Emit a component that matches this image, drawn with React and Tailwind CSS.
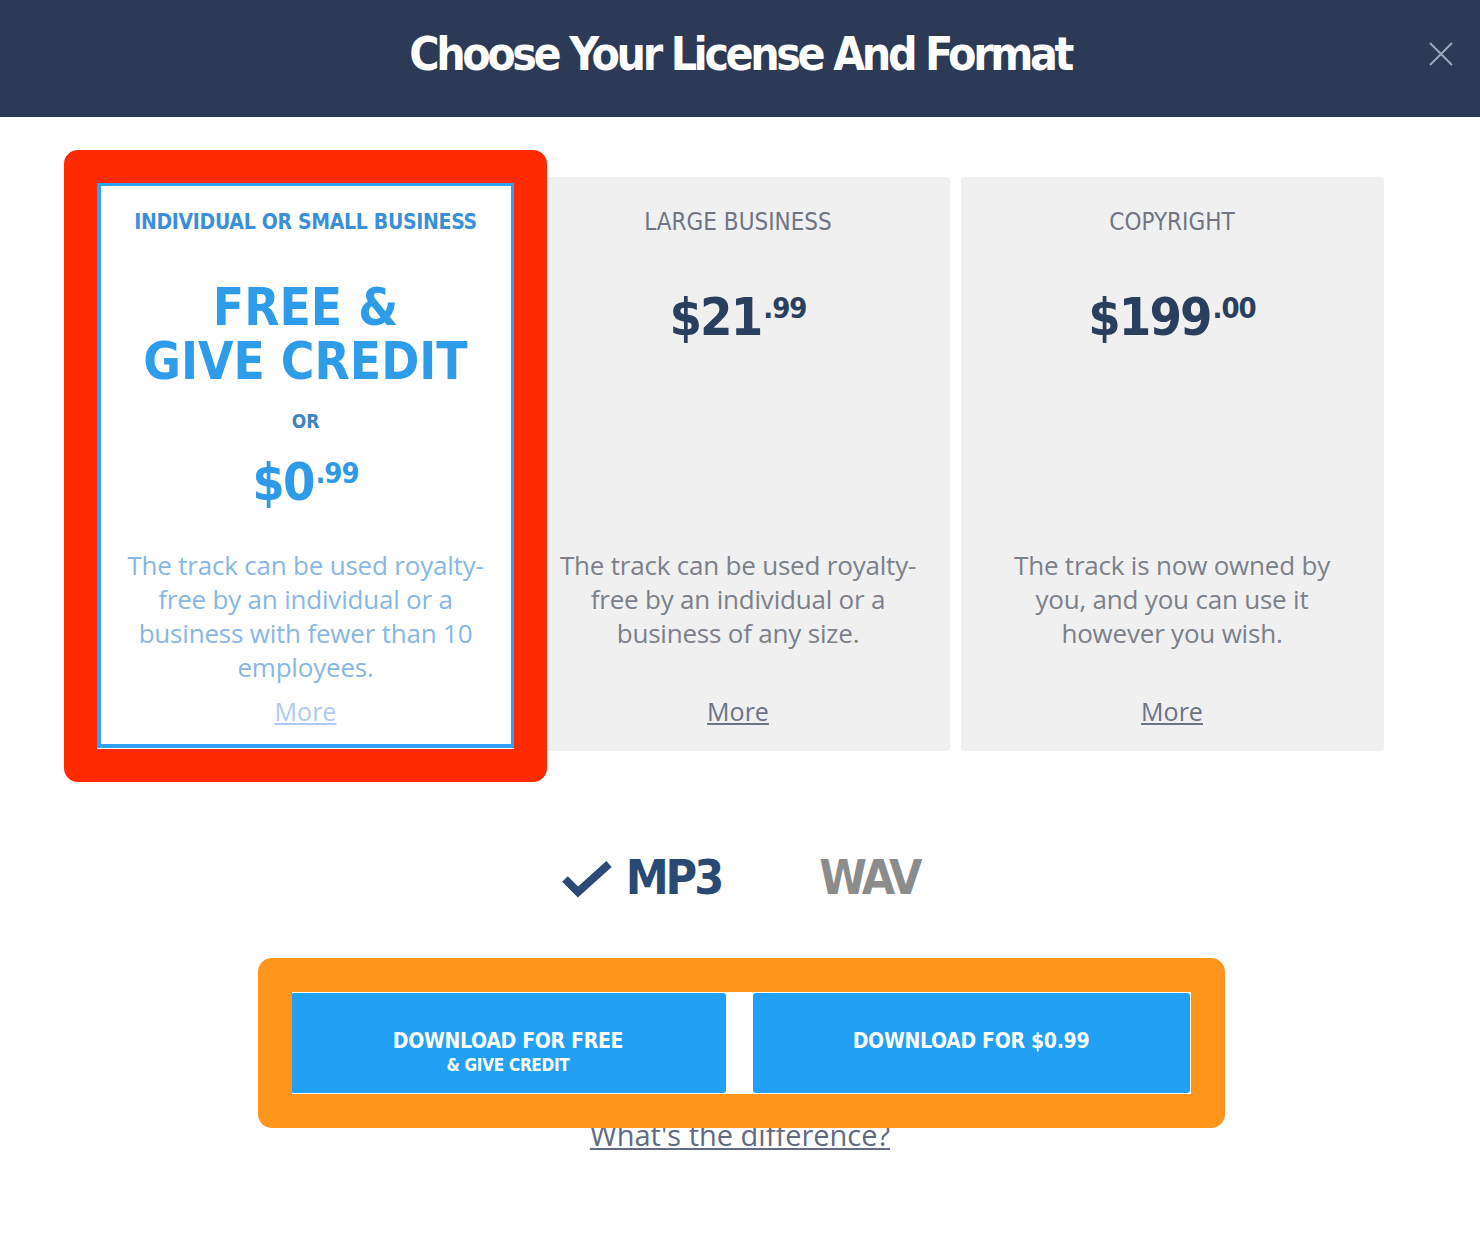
import { useState } from "react";

const narrow = { fontFamily: "'Liberation Sans Narrow', 'DejaVu Sans Condensed', 'Liberation Sans', sans-serif" };
const body = { fontFamily: "'Open Sans', Lato, sans-serif" };

const plans = [
  {
    id: "small",
    title: "INDIVIDUAL OR SMALL BUSINESS",
    whole: "$0",
    cents: ".99",
    lines: ["The track can be used royalty-", "free by an individual or a", "business with fewer than 10", "employees."],
  },
  {
    id: "large",
    title: "LARGE BUSINESS",
    whole: "$21",
    cents: ".99",
    lines: ["The track can be used royalty-", "free by an individual or a", "business of any size."],
  },
  {
    id: "copyright",
    title: "COPYRIGHT",
    whole: "$199",
    cents: ".00",
    lines: ["The track is now owned by", "you, and you can use it", "however you wish."],
  },
];

function Price({ whole, cents, className = "" }) {
  return (
    <div className={`flex items-start justify-center font-bold ${className}`} style={narrow}>
      <span className="text-[52px] leading-[60px] tracking-[-2px]">{whole}</span>
      <span className="text-[29px] leading-none mt-[7px] ml-[2px] tracking-[-1px]">{cents}</span>
    </div>
  );
}

function Description({ lines, className }) {
  return (
    <p className={`text-[26px] leading-[34px] whitespace-nowrap tracking-[-0.2px] ${className}`} style={body}>
      {lines.map((line) => (
        <span key={line} className="block">
          {line}
        </span>
      ))}
    </p>
  );
}

function SelectedCard({ plan }) {
  return (
    <div className="w-[418px] h-[566px] mt-[5px] bg-white border-[4px] border-[#2ea3f4] flex flex-col items-center text-center pt-[22px] pb-[16px]">
      <div className="text-[21px] leading-[28px] font-bold text-[#3b8fd8] whitespace-nowrap tracking-[-0.3px]" style={narrow}>
        {plan.title}
      </div>
      <div className="h-[312px] w-full flex flex-col items-center">
        <div className="mt-[45px] text-[51px] leading-[54px] font-bold text-[#2f9ce9]" style={narrow}>
          FREE &amp;
          <br />
          GIVE CREDIT
        </div>
        <div className="mt-[20px] text-[19px] leading-[24px] font-bold text-[#3e83c2]" style={narrow}>
          OR
        </div>
        <Price whole={plan.whole} cents={plan.cents} className="mt-[19px] text-[#2f9be8]" />
      </div>
      <Description lines={plan.lines} className="text-[#88b7e6]" />
      <a href="#" className="mt-auto text-[25px] leading-[34px] underline text-[#afcbef]" style={body}>
        More
      </a>
    </div>
  );
}

function Card({ plan }) {
  return (
    <div className="w-[423px] h-[574px] bg-[#f0f0f0] rounded-[4px] flex flex-col items-center text-center pt-[31px] pb-[23px]">
      <div className="text-[24px] leading-[28px] text-[#6f7583]" style={narrow}>
        {plan.title}
      </div>
      <div className="h-[312px] w-full">
        <Price whole={plan.whole} cents={plan.cents} className="mt-[51px] text-[#2a3e5e]" />
      </div>
      <Description lines={plan.lines} className="text-[#7b808a]" />
      <a href="#" className="mt-auto text-[25px] leading-[34px] underline text-[#6c7384]" style={body}>
        More
      </a>
    </div>
  );
}

export default function App() {
  const [format, setFormat] = useState("mp3");

  return (
    <div className="relative h-[1233px] bg-white overflow-hidden">
      <header className="relative h-[117px] bg-[#2c3a56] flex items-center justify-center pb-[10px]">
        <h1 className="text-[46px] leading-none font-bold text-white tracking-[-3.4px]" style={narrow}>
          Choose Your License And Format
        </h1>
        <button className="absolute right-[27px] top-[42px] w-[24px] h-[24px]" aria-label="Close">
          <svg viewBox="0 0 24 24" className="w-[24px] h-[24px]">
            <path d="M1 1 L23 23 M23 1 L1 23" stroke="#9ea7bb" strokeWidth="2" fill="none" />
          </svg>
        </button>
      </header>

      <div className="flex justify-center items-start mt-[60px]">
        <SelectedCard plan={plans[0]} />
        <div className="ml-[12px]">
          <Card plan={plans[1]} />
        </div>
        <div className="ml-[11px]">
          <Card plan={plans[2]} />
        </div>
      </div>

      <div className="flex justify-center items-center mt-[98px] h-[56px]" style={narrow}>
        <button onClick={() => setFormat("mp3")} className="flex items-center">
          <svg viewBox="0 0 52 40" className="w-[52px] h-[40px] mr-[13px] mt-[4px]">
            <polyline points="4,20 17,33 48,5" fill="none" stroke="#2c4a73" strokeWidth="8" />
          </svg>
          <span className={`text-[48px] leading-[56px] font-bold tracking-[-3px] ${format === "mp3" ? "text-[#2b4a73]" : "text-[#8c8c8c]"}`}>
            MP3
          </span>
        </button>
        <button
          onClick={() => setFormat("wav")}
          className={`ml-[98px] text-[48px] leading-[56px] font-bold tracking-[-3px] ${format === "wav" ? "text-[#2b4a73]" : "text-[#8c8c8c]"}`}
        >
          WAV
        </button>
      </div>

      <div className="flex justify-center gap-[27px] mt-[88px]" style={narrow}>
        <button className="w-[435px] h-[100px] bg-[#22a1f4] rounded-[3px] flex flex-col items-center pt-[36px] text-white font-bold tracking-[-0.3px]">
          <span className="text-[21px] leading-[24px]">DOWNLOAD FOR FREE</span>
          <span className="text-[17px] leading-[20px] mt-[2px]">&amp; GIVE CREDIT</span>
        </button>
        <button className="w-[437px] h-[100px] bg-[#22a1f4] rounded-[3px] flex flex-col items-center pt-[36px] text-white font-bold tracking-[-0.3px]">
          <span className="text-[21px] leading-[24px]">DOWNLOAD FOR $0.99</span>
        </button>
      </div>

      <div className="flex justify-center mt-[24px]">
        <a href="#" className="text-[29px] leading-[36px] underline text-[#626b80]" style={body}>
          What's the difference?
        </a>
      </div>

      {/* highlight frames drawn over the selected card and the download buttons */}
      <div className="absolute left-[64px] top-[150px] w-[483px] h-[632px] border-[33px] border-[#ff2a00] rounded-[14px] pointer-events-none" />
      <div className="absolute left-[258px] top-[958px] w-[967px] h-[170px] border-[34px] border-[#ff951a] rounded-[14px] pointer-events-none" />
    </div>
  );
}
